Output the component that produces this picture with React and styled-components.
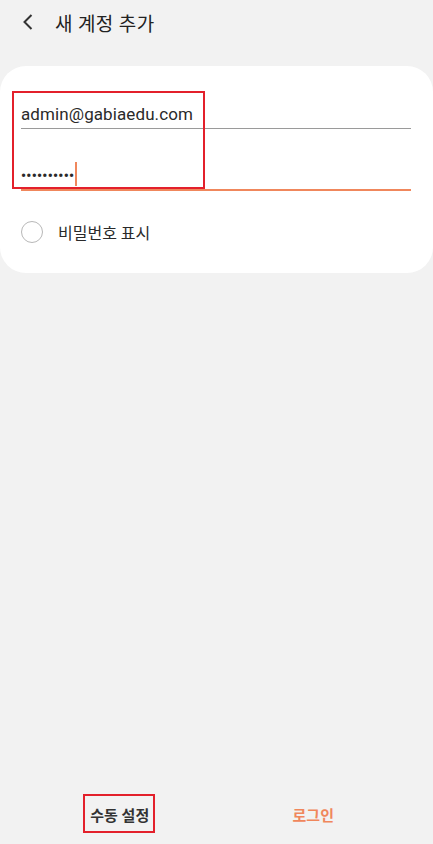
import React from "react";
import styled, { createGlobalStyle } from "styled-components";

const Global = createGlobalStyle`
  html, body { margin: 0; padding: 0; background: #f2f2f2; }
  body { font-family: Roboto, "Noto Sans CJK KR", sans-serif; }
  * { box-sizing: border-box; }
`;

const Page = styled.div`
  min-height: 844px;
  display: flex;
  flex-direction: column;
  background: #f2f2f2;
`;

const Header = styled.header`
  height: 44px;
  display: flex;
  align-items: center;
  padding-left: 22px;
  gap: 21px;
`;

const BackBtn = styled.span`
  display: flex;
  width: 12px;
  height: 18px;
  align-items: center;
`;

const Title = styled.h1`
  margin: 0;
  font-size: 19px;
  font-weight: 400;
  color: #222;
  letter-spacing: 0.4px;
`;

const Card = styled.section`
  margin-top: 22px;
  background: #fff;
  border-radius: 26px;
  padding: 24px 22px 29px 21px;
  position: relative;
`;

const Field = styled.div`
  height: ${(p) => p.$h}px;
  display: flex;
  align-items: flex-end;
  padding-bottom: ${(p) => p.$pb}px;
  border-bottom: ${(p) => (p.$active ? "2px solid #f0875c" : "1px solid #9a9a9a")};
  font-size: 17px;
  line-height: 22px;
  letter-spacing: 0.1px;
  color: #2a2a2a;
`;

const Dots = styled.span`
  font-size: 14px;
  letter-spacing: 0.3px;
  line-height: 24px;
  font-weight: 700;
  position: relative;
  top: 2px;
`;

const Caret = styled.span`
  display: inline-block;
  width: 2px;
  height: 24px;
  background: #f0875c;
  margin-left: 1px;
`;

const Highlight = styled.div`
  position: absolute;
  border: 2px solid #e3202b;
  pointer-events: none;
  left: ${(p) => p.$x}px;
  top: ${(p) => p.$y}px;
  width: ${(p) => p.$w}px;
  height: ${(p) => p.$hh}px;
`;

const RadioRow = styled.label`
  margin-top: 29px;
  height: 24px;
  display: flex;
  align-items: center;
  gap: 15px;
  font-size: 16px;
  color: #2a2a2a;
`;

const Radio = styled.span`
  width: 22px;
  height: 22px;
  border-radius: 50%;
  border: 1.5px solid #b8b8b8;
`;

const Footer = styled.footer`
  margin-top: auto;
  height: 60px;
  display: grid;
  grid-template-columns: 1fr 1fr;
  padding: 0 23px;
  position: relative;
`;

const FooterBtn = styled.button`
  border: none;
  background: none;
  font-family: Roboto, "Noto Sans CJK KR", sans-serif;
  font-size: 15px;
  font-weight: 700;
  color: ${(p) => (p.$accent ? "#f0875c" : "#333")};
  display: flex;
  align-items: center;
  justify-content: center;
`;

export default function App() {
  return (
    <Page>
      <Global />
      <Header>
        <BackBtn>
          <svg width="12" height="18" viewBox="0 0 12 18">
            <path d="M9.5 2 L2.5 9 L9.5 16" fill="none" stroke="#333" strokeWidth="2" />
          </svg>
        </BackBtn>
        <Title>새 계정 추가</Title>
      </Header>
      <Card>
        <Field $h={39} $pb={3}>admin@gabiaedu.com</Field>
        <Field $h={62} $pb={3} $active>
          <Dots>••••••••••</Dots>
          <Caret />
        </Field>
        <RadioRow>
          <Radio />
          비밀번호 표시
        </RadioRow>
        <Highlight $x={12} $y={25} $w={193} $hh={98} />
      </Card>
      <Footer>
        <FooterBtn>수동 설정</FooterBtn>
        <FooterBtn $accent>로그인</FooterBtn>
        <Highlight $x={83} $y={10} $w={72} $hh={39} />
      </Footer>
    </Page>
  );
}
